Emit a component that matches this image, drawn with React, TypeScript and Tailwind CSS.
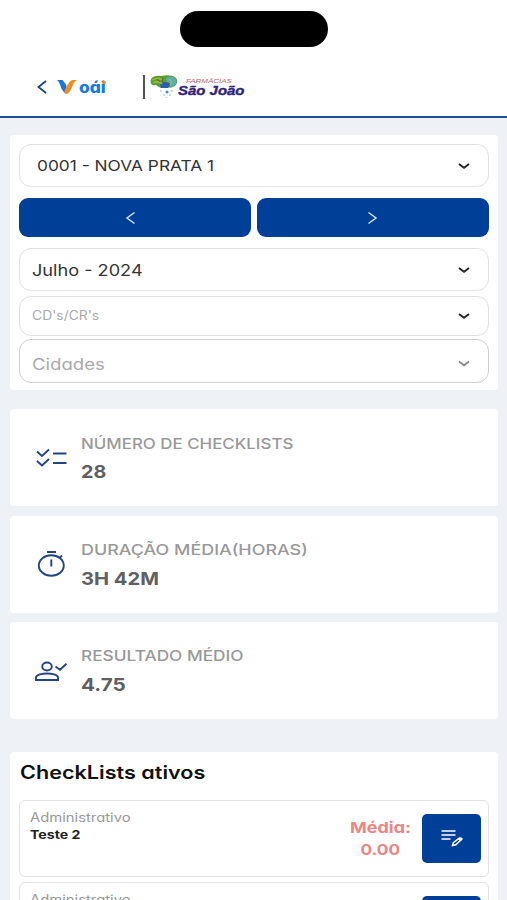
import type { ReactNode } from "react";
import clsx from "clsx";

const checklists = [
  { id: 1, category: "Administrativo", title: "Teste 2", average: "0.00" },
  { id: 2, category: "Administrativo", title: "Teste 3", average: "0.00" },
];

export default function App() {
  return (
    <div className="h-[900px] w-full overflow-hidden bg-[#eef2f7] font-[Inter,sans-serif] [font-feature-settings:'cv11']">
      <Header />

      <main className="flex flex-col px-2.5 pr-[9px] pt-[17px]">
        <section className="flex h-[255px] flex-col rounded-[4px] bg-white px-[9px] pt-[9px]">
          <SelectBox className="h-[43px] border-[#e2e2e2] pl-[17px]">
            <Stretch className="translate-y-px scale-x-[1.155] text-[15px] text-[#333]">0001 - NOVA PRATA 1</Stretch>
          </SelectBox>
          <div className="mt-[11px] grid h-[39px] grid-cols-2 gap-1.5">
            <NavButton className="-translate-x-1" path="M13.500 5.500 6 11l7.500 5.500" />
            <NavButton className="-translate-x-px" path="M6.500 5.500 14 11l-7.500 5.500" />
          </div>
          <SelectBox className="mt-[11px] h-[43px] border-[#e2e2e2] pl-3">
            <Stretch className="translate-y-px scale-x-[1.17] text-[15.5px] text-[#333]">Julho - 2024</Stretch>
          </SelectBox>
          <SelectBox className="mt-[5px] h-[40px] border-[#e0e0e0] pl-3">
            <Stretch className="scale-x-[1.11] text-[12.5px] text-[#aaa]">CD's/CR's</Stretch>
          </SelectBox>
          <SelectBox className="mt-[3px] h-[44px] border-[#cfcfcf] pl-3" muted>
            <Stretch className="translate-y-[3px] scale-x-[1.16] text-[16px] text-[#aaa]">Cidades</Stretch>
          </SelectBox>
        </section>

        <div className="mt-[19px] flex flex-col gap-[9.5px]">
          <StatCard
            icon={<ChecklistIcon />}
            label={<Stretch className="scale-x-[1.165] text-[14.5px] font-medium text-[#999]">NÚMERO DE CHECKLISTS</Stretch>}
            value={<Stretch className="scale-x-[1.1] text-[18px] font-bold text-[#606060]">28</Stretch>}
          />
          <StatCard
            icon={<StopwatchIcon />}
            label={
              <Stretch className="-translate-y-px scale-x-[1.235] text-[14.5px] font-medium text-[#999]">
                DURAÇÃO MÉDIA(HORAS)
              </Stretch>
            }
            value={<Stretch className="scale-x-[1.12] text-[18px] font-bold text-[#606060]">3H 42M</Stretch>}
          />
          <StatCard
            icon={<PersonCheckIcon />}
            label={
              <Stretch className="-translate-y-px scale-x-[1.19] text-[14.5px] font-medium text-[#999]">
                RESULTADO MÉDIO
              </Stretch>
            }
            value={<Stretch className="scale-x-[1.15] text-[18px] font-bold text-[#606060]">4.75</Stretch>}
          />
        </div>

        <section className="mt-[33px] h-[260px] rounded-[4px] bg-white px-[9px] pt-2">
          <h2 className="h-[39.5px] pt-px pl-px text-[18px] leading-6 font-semibold text-[#111]">
            <Stretch className="scale-x-[1.2]">CheckLists ativos</Stretch>
          </h2>
          <div className="flex flex-col gap-[4.5px]">
            {checklists.map((item) => (
              <ChecklistRow key={item.id} {...item} />
            ))}
          </div>
        </section>
      </main>
    </div>
  );
}

function Header() {
  return (
    <header className="flex h-[118px] flex-col border-b-2 border-[#20508f] bg-white pt-[11px]">
      <div className="ml-[180px] h-9 w-[148px] rounded-full bg-black" />
      <div className="mt-[26px] flex h-7 items-center">
        <svg className="ml-9 h-4 w-3" viewBox="0 0 12 16" fill="none" stroke="#1d4279" strokeWidth="1.8">
          <path d="M10 2 2.5 8 10 14" />
        </svg>
        <svg className="ml-[9px] h-4 w-5" viewBox="0 0 20 16">
          <path d="M0 1h5.500L9 5.500 10 10 7.500 14Q4 10 3 5.500Q2.500 3 0 1Z" fill="#1676df" />
          <path d="M7.500 14Q7 11 9 8.500L12.500 3Q13.500 1 16 1H19.500Q17 3 15.500 7Q13.500 12.500 11 14.500Q9 15.500 7.500 14Z" fill="#f08a22" />
        </svg>
        <span className="relative ml-0.5 w-[27px] text-[15.5px] leading-none font-extrabold text-[#1479e6]">
          <Stretch className="translate-y-px scale-x-[1.12]">oái</Stretch>
          <i className="absolute top-[2px] right-[0.5px] h-[3px] w-[3.500px] rounded-full bg-[#f08a22]" />
        </span>
        <div className="ml-[37px] h-6 w-[1.500px] bg-[#555]" />
        <PharmacyLogo />
      </div>
    </header>
  );
}

function PharmacyLogo() {
  return (
    <div className="ml-[5px] flex h-6 items-start">
      <svg className="h-6 w-7" viewBox="0 0 28 24">
        <path d="M1 4Q4 0 11 1Q20-1 25 2Q29 5 26 10Q22 14 17 12L11 13Q8 12 6 10Q-1 11 1 4Z" fill="#5d9d35" />
        <path d="M16 3Q22 0 26 4Q28 9 22 12Q16 12 17 8Z" fill="#5aacb3" />
        <path d="M10 9Q15 5 21 9L18 13H11Z" fill="#2d5eab" />
        <path d="M2 5Q8 2 13 5M3 8Q8 5 12 9M19 4Q23 6 20 10" stroke="#a0bf3f" strokeWidth="1.300" fill="none" />
        <path d="M7 4 10 7M13 3 12 7" stroke="#755a34" strokeWidth="1" />
        <g fill="#b8cde5">
          <circle cx="11" cy="16" r="1" />
          <circle cx="22" cy="16" r="1" />
          <circle cx="14" cy="20" r="1" />
          <circle cx="20" cy="20" r="1" />
          <circle cx="16.500" cy="22.500" r=".8" />
        </g>
        <circle cx="17" cy="17" r="1.500" fill="#438bd1" />
      </svg>
      <div className="flex flex-col pt-[3px] font-['Liberation_Sans',sans-serif]">
        <span className="ml-2 h-[7px] text-[5.500px] leading-[6px] text-[#b96565] italic">
          <Stretch className="scale-x-[1.45]">FARMÁCIAS</Stretch>
        </span>
        <span className="h-3 text-[13px] leading-3 font-bold text-[#302477] italic [-webkit-text-stroke:0.4px_#302477]">
          <Stretch className="scale-x-[1.15]">São João</Stretch>
        </span>
      </div>
    </div>
  );
}

// Wide lettering, grown from its left edge
function Stretch({ className, children }: { className?: string; children: ReactNode }) {
  return <span className={clsx("inline-block origin-left whitespace-nowrap", className)}>{children}</span>;
}

function SelectBox({
  className,
  muted,
  children,
}: {
  className?: string;
  muted?: boolean;
  children: ReactNode;
}) {
  return (
    <div className={clsx("flex shrink-0 items-center justify-between rounded-[12px] border-[1.5px] pr-[18px]", className)}>
      {children}
      <svg
        className={clsx("h-2 w-3", muted ? "translate-y-[2.5px] text-[#888]" : "text-[#222]")}
        viewBox="0 0 12 8"
        fill="none"
        stroke="currentColor"
        strokeWidth="1.8"
      >
        <path d="M1 2 6 5.800 11 2" />
      </svg>
    </div>
  );
}

function NavButton({ path, className }: { path: string; className: string }) {
  return (
    <button className="flex items-center justify-center rounded-[9px] bg-[#003f98]">
      <svg className={clsx("h-[22px] w-5", className)} viewBox="0 0 20 22" fill="none" stroke="#d3e3f8" strokeWidth="1.500">
        <path d={path} />
      </svg>
    </button>
  );
}

function StatCard({ icon, label, value }: { icon: ReactNode; label: ReactNode; value: ReactNode }) {
  return (
    <div className="flex h-[97px] items-center rounded-[4px] bg-white pl-6">
      {icon}
      <div className="ml-[11px] flex flex-col items-start">
        <div className="h-[28px] pt-px leading-6">{label}</div>
        <div className="h-[27px] leading-7">{value}</div>
      </div>
    </div>
  );
}

function ChecklistIcon() {
  return (
    <svg className="h-8 w-9" viewBox="0 0 36 32" fill="none" stroke="#244580" strokeWidth="1.900">
      <path d="M3 9.500 8 14 15 7.500M3 19 8 23.500 15 17M19 11.500h13.500M19 21h13.500" />
    </svg>
  );
}

function StopwatchIcon() {
  return (
    <svg className="h-8 w-9" viewBox="0 0 36 32" fill="none" stroke="#244580" strokeWidth="1.900">
      <ellipse cx="17.300" cy="17.500" rx="12.500" ry="10.300" />
      <path d="M13 4h9M17.300 11.500v7M26 9.500l2-2" />
    </svg>
  );
}

function PersonCheckIcon() {
  return (
    <svg className="h-8 w-9" viewBox="0 0 36 32" fill="none" stroke="#244580" strokeWidth="1.900">
      <ellipse cx="13" cy="11.500" rx="4.800" ry="4" />
      <path d="M2 25v-2.500c0-2.800 6.500-4 11-4s11 1.200 11 4V25ZM21.500 11.500l4.500 3.300 6.500-6" />
    </svg>
  );
}

function ChecklistRow({ category, title, average }: { category: string; title: string; average: string }) {
  return (
    <div className="flex h-[77.5px] shrink-0 items-center rounded-[6px] border-[1.500px] border-[#e2e3e6] pr-[7px] pl-[10px]">
      <div className="flex flex-1 flex-col items-start self-start pt-2">
        <Stretch className="h-[17px] scale-x-[1.185] text-[12.500px] leading-[17px] text-[#999]">{category}</Stretch>
        <Stretch className="h-[17px] scale-x-[1.18] text-[12px] leading-[17px] font-bold text-[#222]">{title}</Stretch>
      </div>
      <div className="mr-[11px] flex w-[61px] flex-col items-center pt-0.5 text-[15px] leading-[22px] font-bold text-[#ed8585]">
        <span className="scale-x-[1.2]">Média:</span>
        <span className="scale-x-[1.15]">{average}</span>
      </div>
      <button className="flex h-[49px] w-[59px] items-center justify-center rounded-[5px] bg-[#003f98]">
        <svg className="h-5 w-6" viewBox="0 0 24 20" fill="none" stroke="#fff">
          <path d="M1.500 3h14M1.500 7h14M1.500 11h9" strokeWidth="1.500" />
          <path d="m12.500 17.500.8-2.800 6-4.500q1.500-.8 2.700.8l-6.200 5.800Z" strokeWidth="1.500" />
          <path d="m18.500 10.500 3 1.700" strokeWidth="2.200" />
        </svg>
      </button>
    </div>
  );
}
